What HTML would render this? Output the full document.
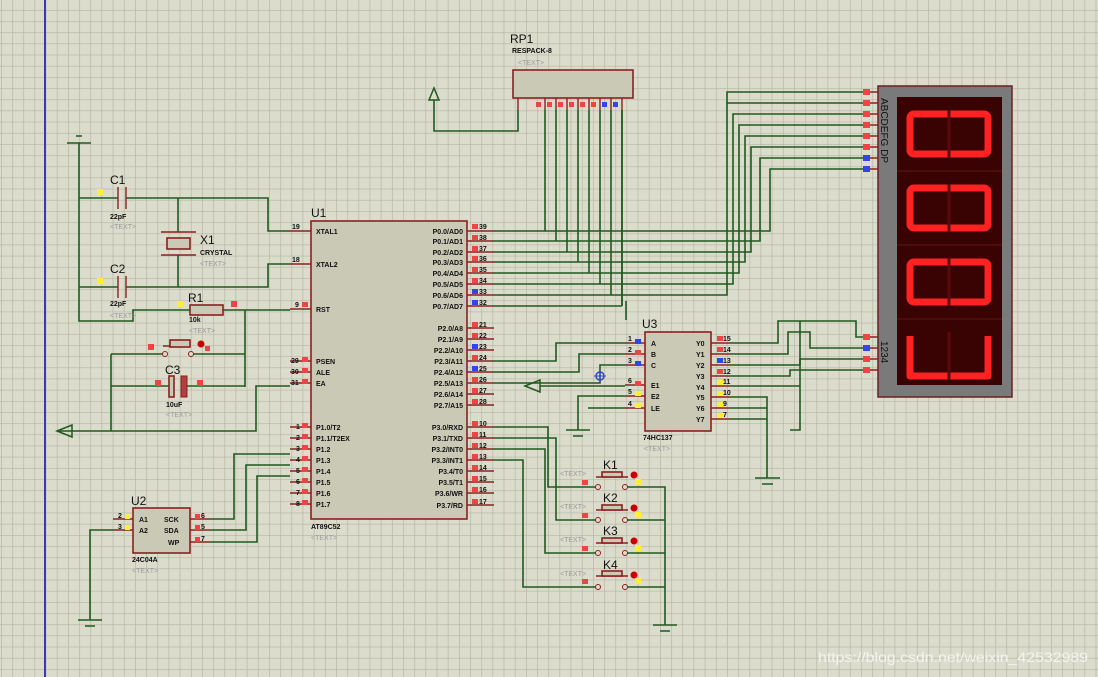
<!DOCTYPE html>
<html><head><meta charset="utf-8"><style>
html,body{margin:0;padding:0;background:#dcdccd;}
svg{display:block;}
text{font-family:"Liberation Sans",sans-serif;}
.t{font-size:7px;font-weight:bold;fill:#111;}
.g{font-size:7px;fill:#9a9a9a;}
.l{font-size:12px;fill:#111;}
.w{stroke:#1f5a1f;stroke-width:1.6;fill:none;}
.p{stroke:#8b2020;stroke-width:1.4;fill:none;}
.b{fill:#c9c9b6;stroke:#8b2020;stroke-width:1.6;}
</style></head><body>
<svg width="1098" height="677" viewBox="0 0 1098 677" xmlns="http://www.w3.org/2000/svg">
<defs>
<pattern id="gr" x="1" y="10" width="11.17" height="11.17" patternUnits="userSpaceOnUse">
<path d="M0 0H11.17M0 0V11.17" stroke="#b4b4a2" stroke-width="1.3" fill="none"/>
</pattern>
</defs>
<rect width="1098" height="677" fill="#dcdccd"/>
<rect width="1098" height="677" fill="url(#gr)"/>
<line x1="45" y1="0" x2="45" y2="677" stroke="#3838b8" stroke-width="2"/>

<g class="w">
<path d="M67 143H91M76 136H82M79 143V321H133V310H190"/>
<path d="M79 198H118M126 198H268V231H290"/>
<path d="M79 287H118M126 287H268V264H290"/>
<path d="M178 198V232M178 255V287"/>
<path d="M223 310H290M245 310V387"/>
<path d="M111 354H163M190 354H245"/>
<path d="M111 386H172M183 386H245"/>
<path d="M111 354V431M57 431H256V386H290"/>
</g>
<g class="p">
<path d="M118 187V209M126 187V209M118 276V298M126 276V298"/>
<path d="M161 232H196M161 255H196"/>
<path d="M163 346H190"/>
</g>
<rect x="167" y="238" width="23" height="11" class="b"/>
<rect x="190" y="305" width="33" height="10" class="b"/>
<rect x="170" y="340" width="20" height="7" class="b"/>
<rect x="169" y="376" width="5" height="21" class="b"/>
<rect x="181" y="376" width="6" height="21" fill="#b04040" stroke="#8b2020"/>
<circle cx="165" cy="354" r="2.5" fill="#dcdccd" stroke="#8b2020"/>
<circle cx="191" cy="354" r="2.5" fill="#dcdccd" stroke="#8b2020"/>
<circle cx="201" cy="344" r="3.5" fill="#c00"/>
<path d="M57 431L72 425V437Z" fill="none" stroke="#1f5a1f" stroke-width="1.5"/>
<g fill="#ffee33"><rect x="97" y="189" width="6" height="6"/><rect x="97" y="278" width="6" height="6"/><rect x="177" y="301" width="6" height="6"/></g>
<g fill="#ee4444"><rect x="231" y="301" width="6" height="6"/><rect x="148" y="344" width="6" height="6"/><rect x="205" y="346" width="5" height="5"/><rect x="155" y="380" width="6" height="6"/><rect x="197" y="380" width="6" height="6"/></g>
<text x="110" y="184" class="l">C1</text><text x="110" y="219" class="t">22pF</text><text x="110" y="229" class="g">&lt;TEXT&gt;</text>
<text x="110" y="273" class="l">C2</text><text x="110" y="306" class="t">22pF</text><text x="110" y="318" class="g">&lt;TEXT&gt;</text>
<text x="200" y="244" class="l">X1</text><text x="200" y="255" class="t">CRYSTAL</text><text x="200" y="266" class="g">&lt;TEXT&gt;</text>
<text x="188" y="302" class="l">R1</text><text x="189" y="322" class="t">10k</text><text x="189" y="333" class="g">&lt;TEXT&gt;</text>
<text x="165" y="374" class="l">C3</text><text x="166" y="407" class="t">10uF</text><text x="166" y="417" class="g">&lt;TEXT&gt;</text>

<rect x="311" y="221" width="156" height="298" class="b"/>
<text x="311" y="217" class="l">U1</text>
<g class="p">
<path d="M290 231H311M290 264H311M290 309H311M290 361H311M290 372H311M290 383H311"/>
<path d="M290 427H311M290 438H311M290 449H311M290 460H311M290 471H311M290 482H311M290 493H311M290 504H311"/>
<path d="M467 231H494M467 241H494M467 252H494M467 262H494M467 273H494M467 284H494M467 295H494M467 306H494"/>
<path d="M467 328H494M467 339H494M467 350H494M467 361H494M467 372H494M467 383H494M467 394H494M467 405H494"/>
<path d="M467 427H494M467 438H494M467 449H494M467 460H494M467 471H494M467 482H494M467 493H494M467 505H494"/>
</g>
<g class="t">
<text x="316" y="234">XTAL1</text><text x="316" y="267">XTAL2</text><text x="316" y="312">RST</text>
<text x="316" y="364">PSEN</text><text x="316" y="375">ALE</text><text x="316" y="386">EA</text>
<text x="316" y="430">P1.0/T2</text><text x="316" y="441">P1.1/T2EX</text><text x="316" y="452">P1.2</text><text x="316" y="463">P1.3</text><text x="316" y="474">P1.4</text><text x="316" y="485">P1.5</text><text x="316" y="496">P1.6</text><text x="316" y="507">P1.7</text>
<text x="292" y="229">19</text><text x="292" y="262">18</text><text x="295" y="307">9</text><text x="291" y="363">29</text><text x="291" y="374">30</text><text x="291" y="385">31</text>
<text x="296" y="429">1</text><text x="296" y="440">2</text><text x="296" y="451">3</text><text x="296" y="462">4</text><text x="296" y="473">5</text><text x="296" y="484">6</text><text x="296" y="495">7</text><text x="296" y="506">8</text>
</g>
<g class="t" text-anchor="end">
<text x="463" y="234">P0.0/AD0</text><text x="463" y="244">P0.1/AD1</text><text x="463" y="255">P0.2/AD2</text><text x="463" y="265">P0.3/AD3</text><text x="463" y="276">P0.4/AD4</text><text x="463" y="287">P0.5/AD5</text><text x="463" y="298">P0.6/AD6</text><text x="463" y="309">P0.7/AD7</text>
<text x="463" y="331">P2.0/A8</text><text x="463" y="342">P2.1/A9</text><text x="463" y="353">P2.2/A10</text><text x="463" y="364">P2.3/A11</text><text x="463" y="375">P2.4/A12</text><text x="463" y="386">P2.5/A13</text><text x="463" y="397">P2.6/A14</text><text x="463" y="408">P2.7/A15</text>
<text x="463" y="430">P3.0/RXD</text><text x="463" y="441">P3.1/TXD</text><text x="463" y="452">P3.2/INT0</text><text x="463" y="463">P3.3/INT1</text><text x="463" y="474">P3.4/T0</text><text x="463" y="485">P3.5/T1</text><text x="463" y="496">P3.6/WR</text><text x="463" y="508">P3.7/RD</text>
</g>
<g class="t">
<text x="479" y="229">39</text><text x="479" y="240">38</text><text x="479" y="251">37</text><text x="479" y="261">36</text><text x="479" y="272">35</text><text x="479" y="283">34</text><text x="479" y="294">33</text><text x="479" y="305">32</text>
<text x="479" y="327">21</text><text x="479" y="338">22</text><text x="479" y="349">23</text><text x="479" y="360">24</text><text x="479" y="371">25</text><text x="479" y="382">26</text><text x="479" y="393">27</text><text x="479" y="404">28</text>
<text x="479" y="426">10</text><text x="479" y="437">11</text><text x="479" y="448">12</text><text x="479" y="459">13</text><text x="479" y="470">14</text><text x="479" y="481">15</text><text x="479" y="492">16</text><text x="479" y="504">17</text>
</g>
<g fill="#ee4444">
<rect x="472" y="224" width="6" height="5"/><rect x="472" y="235" width="6" height="5"/><rect x="472" y="246" width="6" height="5"/><rect x="472" y="256" width="6" height="5"/><rect x="472" y="267" width="6" height="5"/><rect x="472" y="278" width="6" height="5"/>
<rect x="472" y="322" width="6" height="5"/><rect x="472" y="333" width="6" height="5"/><rect x="472" y="355" width="6" height="5"/><rect x="472" y="377" width="6" height="5"/><rect x="472" y="388" width="6" height="5"/><rect x="472" y="399" width="6" height="5"/>
<rect x="472" y="421" width="6" height="5"/><rect x="472" y="432" width="6" height="5"/><rect x="472" y="443" width="6" height="5"/><rect x="472" y="454" width="6" height="5"/><rect x="472" y="465" width="6" height="5"/><rect x="472" y="476" width="6" height="5"/><rect x="472" y="487" width="6" height="5"/><rect x="472" y="499" width="6" height="5"/>
<rect x="302" y="302" width="6" height="5"/><rect x="302" y="357" width="6" height="5"/><rect x="302" y="368" width="6" height="5"/><rect x="302" y="379" width="6" height="5"/>
<rect x="302" y="423" width="6" height="5"/><rect x="302" y="434" width="6" height="5"/><rect x="302" y="445" width="6" height="5"/><rect x="302" y="456" width="6" height="5"/><rect x="302" y="467" width="6" height="5"/><rect x="302" y="478" width="6" height="5"/><rect x="302" y="489" width="6" height="5"/><rect x="302" y="500" width="6" height="5"/>
</g>
<g fill="#3344ee"><rect x="472" y="289" width="6" height="5"/><rect x="472" y="300" width="6" height="5"/><rect x="472" y="344" width="6" height="5"/><rect x="472" y="366" width="6" height="5"/></g>
<text x="311" y="529" class="t">AT89C52</text><text x="311" y="540" class="g">&lt;TEXT&gt;</text>

<rect x="513" y="70" width="120" height="28" class="b"/>
<text x="510" y="43" class="l">RP1</text><text x="512" y="53" class="t">RESPACK-8</text><text x="518" y="65" class="g">&lt;TEXT&gt;</text>
<g class="p"><path d="M518 98V110M545 98V110M556 98V110M567 98V110M578 98V110M589 98V110M600 98V110M611 98V110M622 98V110"/></g>
<g fill="#ee4444"><rect x="536" y="102" width="5" height="5"/><rect x="547" y="102" width="5" height="5"/><rect x="558" y="102" width="5" height="5"/><rect x="569" y="102" width="5" height="5"/><rect x="580" y="102" width="5" height="5"/><rect x="591" y="102" width="5" height="5"/></g>
<g fill="#3344ee"><rect x="602" y="102" width="5" height="5"/><rect x="613" y="102" width="5" height="5"/></g>
<path d="M429 100L434 88L439 100Z" fill="none" stroke="#1f5a1f" stroke-width="1.5"/>
<g class="w">
<path d="M434 100V131H518V110"/>
<path d="M545 110V231M556 110V241M567 110V252M578 110V262M589 110V273M600 110V284M611 110V295M622 110V306"/>
<path d="M494 231H770V169H863"/>
<path d="M494 241H760V158H863"/>
<path d="M494 252H751V147H863"/>
<path d="M494 262H745V136H863"/>
<path d="M494 273H739V125H863"/>
<path d="M494 284H733V114H863"/>
<path d="M494 295H727V103H863"/>
<path d="M494 306H622M622 306V110"/>
<path d="M727 103V92H863"/>
</g>
<rect x="878" y="86" width="134" height="311" fill="#7a7a7a" stroke="#6a2020" stroke-width="1.5"/>
<rect x="897" y="97" width="105" height="288" fill="#3a0303"/>
<g stroke="#4a0c0c" stroke-width="2"><path d="M897 171H1002M897 245H1002M897 319H1002"/></g>
<g fill="none" stroke="#ff2222" stroke-width="7" stroke-linejoin="round">
<rect x="910" y="114" width="78" height="40" rx="4"/>
<rect x="910" y="188" width="78" height="40" rx="4"/>
<rect x="910" y="262" width="78" height="40" rx="4"/>
<path d="M910 336V376H988V336"/>
</g>
<g stroke="#5a0a0a" stroke-width="3"><path d="M949 110V158M949 184V232M949 258V306M949 332V380"/></g>
<g class="p"><path d="M863 92H878M863 103H878M863 114H878M863 125H878M863 136H878M863 147H878M863 158H878M863 169H878M863 337H878M863 348H878M863 359H878M863 370H878"/></g>
<g fill="#ee4444"><rect x="863" y="89" width="7" height="6"/><rect x="863" y="100" width="7" height="6"/><rect x="863" y="111" width="7" height="6"/><rect x="863" y="122" width="7" height="6"/><rect x="863" y="133" width="7" height="6"/><rect x="863" y="144" width="7" height="6"/><rect x="863" y="334" width="7" height="6"/><rect x="863" y="356" width="7" height="6"/><rect x="863" y="367" width="7" height="6"/></g>
<g fill="#3344ee"><rect x="863" y="155" width="7" height="6"/><rect x="863" y="166" width="7" height="6"/><rect x="863" y="345" width="7" height="6"/></g>
<text transform="translate(881,98) rotate(90)" style="font-size:10px;fill:#111">ABCDEFG  DP</text>
<text transform="translate(881,341) rotate(90)" style="font-size:10px;fill:#111">1234</text>

<rect x="645" y="332" width="66" height="99" class="b"/>
<text x="642" y="328" class="l">U3</text>
<g class="p"><path d="M625 343H645M625 354H645M625 365H645M625 385H645M625 396H645M625 408H645M711 343H730M711 354H730M711 365H730M711 376H730M711 386H730M711 397H730M711 408H730M711 419H730"/></g>
<g class="t"><text x="651" y="346">A</text><text x="651" y="357">B</text><text x="651" y="368">C</text><text x="651" y="388">E1</text><text x="651" y="399">E2</text><text x="651" y="411">LE</text>
<text x="696" y="346">Y0</text><text x="696" y="357">Y1</text><text x="696" y="368">Y2</text><text x="696" y="379">Y3</text><text x="696" y="390">Y4</text><text x="696" y="400">Y5</text><text x="696" y="411">Y6</text><text x="696" y="422">Y7</text>
<text x="628" y="341">1</text><text x="628" y="352">2</text><text x="628" y="363">3</text><text x="628" y="383">6</text><text x="628" y="394">5</text><text x="628" y="406">4</text>
<text x="723" y="341">15</text><text x="723" y="352">14</text><text x="723" y="363">13</text><text x="723" y="374">12</text><text x="723" y="384">11</text><text x="723" y="395">10</text><text x="723" y="406">9</text><text x="723" y="417">7</text>
<text x="643" y="440">74HC137</text></g>
<text x="644" y="451" class="g">&lt;TEXT&gt;</text>
<g fill="#ee4444"><rect x="635" y="350" width="6" height="5"/><rect x="635" y="381" width="6" height="5"/><rect x="717" y="336" width="6" height="5"/><rect x="717" y="347" width="6" height="5"/><rect x="717" y="369" width="6" height="5"/></g>
<g fill="#3344ee"><rect x="635" y="339" width="6" height="5"/><rect x="635" y="361" width="6" height="5"/><rect x="717" y="358" width="6" height="5"/></g>
<g fill="#ffee33"><rect x="635" y="391" width="6" height="5"/><rect x="635" y="403" width="6" height="5"/><rect x="717" y="380" width="6" height="5"/><rect x="717" y="391" width="6" height="5"/><rect x="717" y="402" width="6" height="5"/><rect x="717" y="413" width="6" height="5"/></g>
<g class="w">
<path d="M494 361H556V343H625"/>
<path d="M494 372H579V354H625"/>
<path d="M494 383H600V365H625"/>
<path d="M540 386H625"/>
<path d="M625 396H578V430M625 408H588"/>
<path d="M566 430H590M573 436H583"/>
<path d="M730 343H778V321H856V337H863"/>
<path d="M730 354H788V332H810V348H863"/>
<path d="M730 365H800V359H863"/>
<path d="M730 376H790V370H863"/>
<path d="M730 386H800M730 397H767V478M730 408H767M730 419H767"/>
<path d="M800 321V430H790"/>
<path d="M755 478H780M762 484H773"/>
<path d="M626 320V301"/>
</g>
<path d="M525 386L540 380V392Z" fill="none" stroke="#1f5a1f" stroke-width="1.5"/>
<circle cx="600" cy="376" r="4" fill="none" stroke="#3344cc" stroke-width="1.5"/><path d="M594 376H606M600 370V382" stroke="#3344cc"/>

<g class="w">
<path d="M494 427H548V487H598"/>
<path d="M494 438H556V520H598"/>
<path d="M494 449H545V553H598"/>
<path d="M494 460H523V587H598"/>
<path d="M625 487H665V625M625 520H665M625 553H665M625 587H665"/>
<path d="M653 625H677M660 631H670"/>
</g>
<g class="p"><path d="M596 477H628M596 510H628M596 543H628M596 576H628"/></g>
<rect x="602" y="472" width="20" height="5" class="b"/><rect x="602" y="505" width="20" height="5" class="b"/><rect x="602" y="538" width="20" height="5" class="b"/><rect x="602" y="571" width="20" height="5" class="b"/>
<g fill="#dcdccd" stroke="#8b2020"><circle cx="598" cy="487" r="2.5"/><circle cx="625" cy="487" r="2.5"/><circle cx="598" cy="520" r="2.5"/><circle cx="625" cy="520" r="2.5"/><circle cx="598" cy="553" r="2.5"/><circle cx="625" cy="553" r="2.5"/><circle cx="598" cy="587" r="2.5"/><circle cx="625" cy="587" r="2.5"/></g>
<g fill="#c00"><circle cx="634" cy="475" r="3.5"/><circle cx="634" cy="508" r="3.5"/><circle cx="634" cy="541" r="3.5"/><circle cx="634" cy="575" r="3.5"/></g>
<g fill="#ffee33"><rect x="635" y="479" width="6" height="6"/><rect x="635" y="512" width="6" height="6"/><rect x="635" y="545" width="6" height="6"/><rect x="635" y="578" width="6" height="6"/></g>
<g fill="#ee4444"><rect x="582" y="480" width="6" height="5"/><rect x="582" y="513" width="6" height="5"/><rect x="582" y="546" width="6" height="5"/><rect x="582" y="579" width="6" height="5"/></g>
<text x="603" y="469" class="l">K1</text><text x="603" y="502" class="l">K2</text><text x="603" y="535" class="l">K3</text><text x="603" y="569" class="l">K4</text>
<text x="560" y="476" class="g">&lt;TEXT&gt;</text><text x="560" y="509" class="g">&lt;TEXT&gt;</text><text x="560" y="542" class="g">&lt;TEXT&gt;</text><text x="560" y="576" class="g">&lt;TEXT&gt;</text>

<rect x="133" y="508" width="57" height="45" class="b"/>
<text x="131" y="505" class="l">U2</text>
<g class="p"><path d="M113 519H133M113 530H133M190 519H210M190 530H210M190 542H210"/></g>
<g class="t"><text x="139" y="522">A1</text><text x="139" y="533">A2</text><text x="164" y="522">SCK</text><text x="164" y="533">SDA</text><text x="168" y="545">WP</text>
<text x="118" y="518">2</text><text x="118" y="529">3</text><text x="201" y="518">6</text><text x="201" y="529">5</text><text x="201" y="541">7</text>
<text x="132" y="562">24C04A</text></g>
<text x="132" y="573" class="g">&lt;TEXT&gt;</text>
<g fill="#ffee33"><rect x="125" y="514" width="5" height="5"/><rect x="125" y="525" width="5" height="5"/></g>
<g fill="#ee4444"><rect x="195" y="514" width="5" height="5"/><rect x="195" y="525" width="5" height="5"/><rect x="195" y="537" width="5" height="5"/></g>
<g class="w">
<path d="M210 519H234V454H290"/>
<path d="M210 530H246V465H290"/>
<path d="M210 542H257V476H290"/>
<path d="M113 530H90V620M78 620H102M85 626H95"/>
</g>
<text x="818" y="662" textLength="270" lengthAdjust="spacingAndGlyphs" style="font-size:14px;fill:#f4f4f0;font-family:'Liberation Sans',sans-serif">https://blog.csdn.net/weixin_42532989</text>
</svg>
</body></html>
